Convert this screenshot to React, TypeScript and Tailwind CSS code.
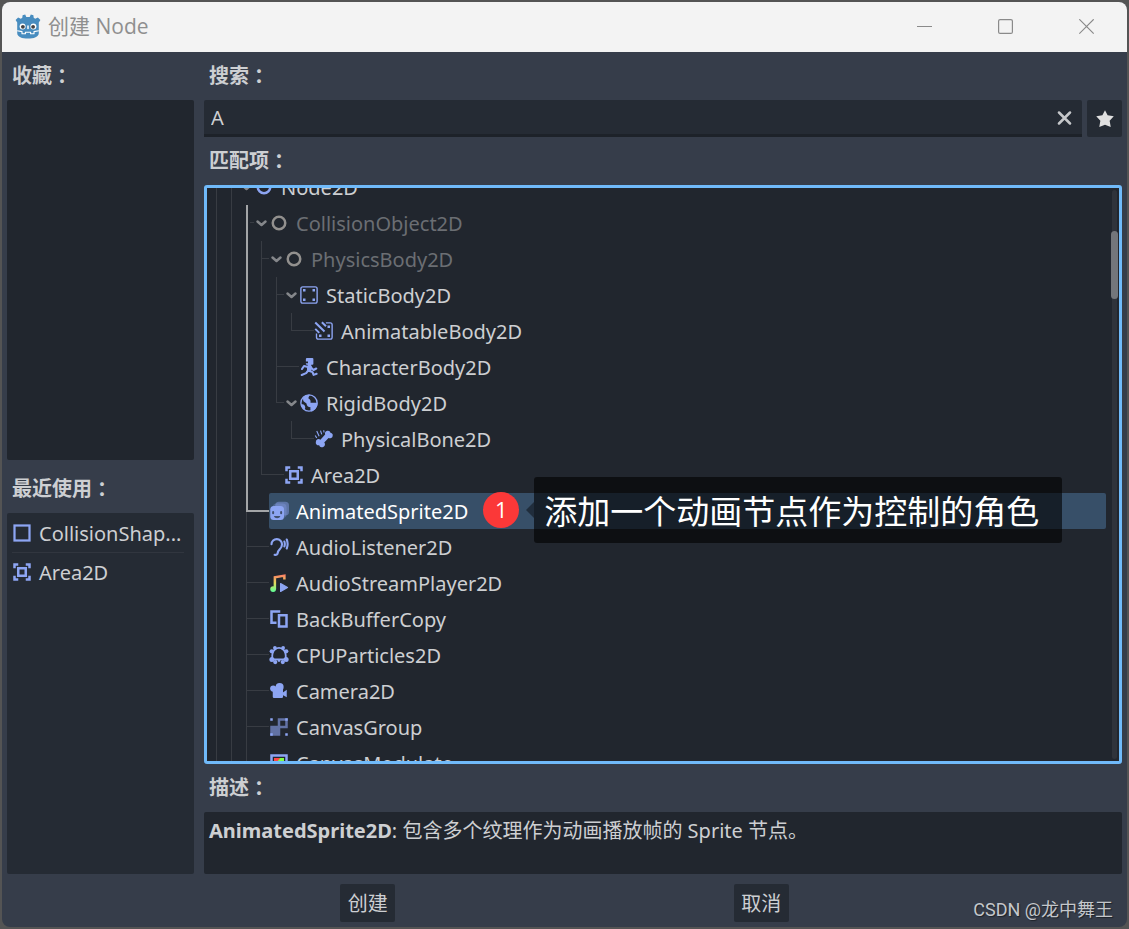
import React from "react";

const BLUE = "#8da5f3";

type IconName =
  | "node2d" | "node" | "static" | "animatable" | "character" | "rigid" | "bone" | "area"
  | "sprite" | "listener" | "audio" | "buffer" | "particles" | "camera" | "group" | "modulate" | "shape";

const drawings: Record<IconName, React.ReactNode> = {
  node2d: <circle cx="8" cy="8" r="5" fill="none" stroke={BLUE} strokeWidth="2" />,
  node: <circle cx="8" cy="8" r="5" fill="none" stroke="#92908e" strokeWidth="2" />,
  static: (
    <>
      <rect x="1.500" y="1.500" width="13" height="13" rx="1.500" fill="none" stroke={BLUE} strokeWidth="1.100" />
      <path fill={BLUE} d="M3.200 3.200h2v2h-2zM10.800 3.200h2v2h-2zM3.200 10.800h2v2h-2zM10.800 10.800h2v2h-2z" />
    </>
  ),
  animatable: (
    <>
      <path
        fill="none"
        stroke={BLUE}
        strokeWidth="1.100"
        d="M9.500 1.500H13a1.500 1.500 0 0 1 1.500 1.500v10a1.500 1.500 0 0 1-1.500 1.500H3.500A1.500 1.500 0 0 1 2 13v-3"
      />
      <path fill={BLUE} d="M10.800 3.600h2v2h-2zM4 10.800h2v2H4zM10.800 10.800h2v2h-2z" />
      <path fill="none" stroke={BLUE} strokeWidth="1.600" d="M1 1.200l7.400 7.200M6.300 1l3.300 3.200M1 6.300l3.200 3.200" />
    </>
  ),
  character: (
    <>
      <path
        fill={BLUE}
        d="M6.300.8h4.400a.8.8 0 0 1 .8.8v3.800a.8.8 0 0 1-.8.8H9.800l-.2 1.300H7.200l-.3-1.300h-.6a.8.8 0 0 1-.8-.8V4.900h1.700V3.500H5.500V1.600a.8.8 0 0 1 .8-.8z"
      />
      <path fill={BLUE} d="M6.400 7h3.800v3l-1 2H6.400z" />
      <path
        fill="none"
        stroke={BLUE}
        strokeWidth="1.700"
        strokeLinecap="round"
        strokeLinejoin="round"
        d="M2.400 9.600L4 7.200l3.200.8M9.400 8.200l2.200 2.200 2.200-1.200M7.200 11l-1.500 1.900-3.500 1.500M8.400 11.200l2.400.9.900 2.200 2.400-.9"
      />
    </>
  ),
  rigid: (
    <>
      <circle cx="8" cy="8" r="6.500" fill="none" stroke={BLUE} strokeWidth="1.100" />
      <path
        fill={BLUE}
        d="M3.400 3.200C5 1.800 6.800 1.300 9 1.500c-1 .8-1.500 1.800-1.400 2.900C9 4.900 9.500 6.200 9.200 7.700h5.600c.2 3.600-2.200 6.400-5.400 7.100-.3-1.600-.4-2.500-.2-3.400C7.300 11.300 6.100 10.100 6 8.300L3.600 6.600C3.200 5.400 3.100 4.200 3.400 3.200z"
      />
      <path fill={BLUE} d="M1.500 9.100c1.200-.3 2.400.1 3.100 1 .6 1 .5 2.200-.3 3.300C2.800 12.600 1.700 11 1.500 9.100z" />
    </>
  ),
  bone: (
    <>
      <path
        fill={BLUE}
        d="M10.600 1.400a2.200 2.200 0 0 1 2.600 1.600 2.200 2.200 0 0 1 1.700 2.700 2.200 2.200 0 0 1-3.300 1.400l-3.400 3.700a2.200 2.200 0 0 1-1.300 3.700 2.200 2.200 0 0 1-2.800-1.500 2.200 2.200 0 0 1-2.600-2.800 2.200 2.200 0 0 1 3.600-1.700l3.800-4.100a2.200 2.200 0 0 1 1.700-3z"
      />
      <path fill="none" stroke={BLUE} strokeWidth=".9" d="M1 5.200l1.200 2M2.200 1.600l1.900 4.200M5.200 1.300l1 3M7.800 1l.2 1.800" />
    </>
  ),
  area: (
    <path
      fill={BLUE}
      fillRule="evenodd"
      d="M1 1v4h2V3h2V1zM11 1v2h2v2h2V1zM1 11v4h4v-2H3v-2zM13 11v2h-2v2h4v-4zM4 4v8h8V4zM6 6h4v4H6z"
    />
  ),
  sprite: (
    <>
      <rect x="5" y="0.500" width="11" height="11" rx="3" fill={BLUE} opacity=".45" />
      <rect x="3" y="2" width="11" height="11.500" rx="3" fill={BLUE} opacity=".3" />
      <rect x="1" y="4" width="11" height="11.200" rx="2.800" fill={BLUE} />
      <path stroke="#42506e" strokeWidth="1.600" strokeLinecap="round" d="M3.300 8.900v.8M9.700 8.900v.8" />
      <path fill="#42506e" d="M3.900 12h5.200c-.4 1.200-1.400 1.700-2.600 1.700s-2.200-.5-2.600-1.700z" />
    </>
  ),
  listener: (
    <path
      fill="none"
      stroke={BLUE}
      strokeWidth="1.700"
      strokeLinecap="round"
      d="M2 5.800a4.200 4.200 0 0 1 8.400.2c0 3.600-3 3.800-3.400 6.600-.2 1.400-1.200 2-2.500 1.600M12.300 3.600c.5 1.400.5 2.600 0 4M14.200 2c.9 2.300.9 5 0 7.200"
    />
  ),
  audio: (
    <>
      <defs>
        <linearGradient id="note" x1="0" x2="0" y1="1" y2="15" gradientUnits="userSpaceOnUse">
          <stop offset="0" stopColor="#ff7a66" />
          <stop offset=".5" stopColor="#e1da5b" />
          <stop offset="1" stopColor="#5fff97" />
        </linearGradient>
      </defs>
      <path fill="none" stroke="url(#note)" strokeWidth="2" d="M4.700 13V3.400l7.600-1.300v3" />
      <circle cx="3.300" cy="12.800" r="2.300" fill="url(#note)" />
      <path fill={BLUE} stroke={BLUE} strokeWidth="1" strokeLinejoin="round" d="M9.300 8.500v6.200l5.500-3.100z" />
    </>
  ),
  buffer: <path fill={BLUE} fillRule="evenodd" d="M1 1v11h5v-2H3V3h6V1zM7 4v11h8V4zM9 6h4v7H9z" />,
  particles: (
    <>
      <path
        fill="none"
        stroke={BLUE}
        strokeWidth="1.400"
        d="M5 3.400C6.500 2 9.500 2 11 3.400c2.200 1.600 2.600 3.600 2.400 6.800-.4.900-1 1.300-2 1.300H4.600c-1 0-1.600-.4-2-1.300C2.400 7 2.800 5 5 3.400z"
      />
      <g fill={BLUE}>
        <circle cx="4.700" cy="2.200" r="1.500" />
        <circle cx="11.300" cy="2.200" r="1.500" />
        <circle cx="2.200" cy="5" r="1.700" />
        <circle cx="13.800" cy="5" r="1.700" />
        <circle cx="2.300" cy="11.500" r="2" />
        <circle cx="13.700" cy="11.500" r="2" />
        <circle cx="5" cy="13.600" r="1.700" />
        <circle cx="11" cy="13.600" r="1.700" />
        <circle cx="8" cy="12.400" r="1.100" />
      </g>
    </>
  ),
  camera: (
    <g fill={BLUE}>
      <circle cx="8.500" cy="4.700" r="3.200" />
      <circle cx="3.400" cy="6" r="2.500" />
      <rect x="3" y="5.500" width="8.200" height="8" rx="1" />
      <path d="M10.500 9.500l3.700-2.500v6l-3.700-2z" />
    </g>
  ),
  group: (
    <g fill={BLUE}>
      <path opacity=".6" fillRule="evenodd" d="M7 1h8v8H9v6H1V7h6zM9 3v4h4V3z" />
      <path d="M1 1h2v2H1zM13 1h2v2h-2zM1 13h2v2H1zM13 13h2v2h-2z" />
    </g>
  ),
  modulate: (
    <>
      <rect x="2" y="2" width="12" height="12" fill="#21262e" stroke={BLUE} strokeWidth="2" />
      <path fill="#ff4545" d="M4 4h6l-6 6z" />
      <path fill="#80ff45" d="M9 4h3v6H4z" />
      <path fill="#45d7ff" d="M4 9h8v3H4z" />
    </>
  ),
  shape: <rect x="2" y="2" width="12" height="12" fill="none" stroke={BLUE} strokeWidth="1.800" />,
};

function NodeIcon({ name }: { name: IconName }) {
  return (
    <svg viewBox="0 0 16 16" className="size-5 shrink-0" aria-hidden="true">
      {drawings[name]}
    </svg>
  );
}

/*
 * Guides, one character per tree level:
 *   "|" line passing through, "H" highlighted line, " " nothing.
 * The last character is the branch of the row itself:
 *   "t" tee, "T" tee on the highlighted line, "l" last child, "L" highlighted end.
 */
type Row = { name: string; icon: IconName; guides: string; open?: boolean; dim?: boolean; selected?: boolean };

const rows: Row[] = [
  { name: "Node2D", icon: "node2d", guides: "|t", open: true },
  { name: "CollisionObject2D", icon: "node", guides: "||T", open: true, dim: true },
  { name: "PhysicsBody2D", icon: "node", guides: "||Ht", open: true, dim: true },
  { name: "StaticBody2D", icon: "static", guides: "||H|t", open: true },
  { name: "AnimatableBody2D", icon: "animatable", guides: "||H||l" },
  { name: "CharacterBody2D", icon: "character", guides: "||H|t" },
  { name: "RigidBody2D", icon: "rigid", guides: "||H|l", open: true },
  { name: "PhysicalBone2D", icon: "bone", guides: "||H| l" },
  { name: "Area2D", icon: "area", guides: "||Hl" },
  { name: "AnimatedSprite2D", icon: "sprite", guides: "||L", selected: true },
  { name: "AudioListener2D", icon: "listener", guides: "||t" },
  { name: "AudioStreamPlayer2D", icon: "audio", guides: "||t" },
  { name: "BackBufferCopy", icon: "buffer", guides: "||t" },
  { name: "CPUParticles2D", icon: "particles", guides: "||t" },
  { name: "Camera2D", icon: "camera", guides: "||t" },
  { name: "CanvasGroup", icon: "group", guides: "||t" },
  { name: "CanvasModulate", icon: "modulate", guides: "||t" },
];

function Guide({ kind }: { kind: string }) {
  return (
    <span className="flex w-[15px] shrink-0">
      {kind === "|" && <span className="w-px bg-[#383c43]" />}
      {kind === "H" && <span className="w-[2px] bg-[#a3a5a7]" />}
    </span>
  );
}

function Branch({ kind, open }: { kind: string; open?: boolean }) {
  return (
    <span className={open ? "flex w-2 shrink-0" : "flex w-[23px] shrink-0"}>
      {kind === "t" && <span className="w-px bg-[#383c43]" />}
      {kind === "T" && <span className="mr-[2px] w-[2px] bg-[#a3a5a7]" />}
      {kind === "l" && <span className="h-[18px] w-px bg-[#383c43]" />}
      {kind === "L" && (
        <span className="flex w-[2px] flex-col">
          <span className="h-[19px] bg-[#a3a5a7]" />
          <span className="w-px flex-1 bg-[#383c43]" />
        </span>
      )}
      <span
        className={kind === "L" ? "mt-[17px] h-[2px] flex-1 bg-[#a3a5a7]" : "mt-[17px] h-px flex-1 bg-[#383c43]"}
      />
    </span>
  );
}

function Callout() {
  return (
    <span className="absolute -top-4 left-full ml-[15px] flex h-[66px] items-center">
      <span className="flex size-9 items-center justify-center rounded-full bg-[#fb3838] pb-[2px] font-['Open_Sans',sans-serif] text-[22px] text-white">
        1
      </span>
      <svg viewBox="0 0 8 16" className="ml-[7px] h-4 w-2" aria-hidden="true">
        <path d="M8 0v16L0 8z" fill="#000" fillOpacity=".42" />
      </svg>
      <span className="flex h-full items-center rounded-[3px] bg-black/60 pt-[3px] pr-[23px] pl-[10px] text-[33px] whitespace-nowrap text-white">
        添加一个动画节点作为控制的角色
      </span>
    </span>
  );
}

function TreeRow({ row }: { row: Row }) {
  const passing = row.guides.slice(0, -1).split("");
  const textColor = row.selected ? "text-white" : row.dim ? "text-[#6b6e73]" : "text-[#cdcfd2]";
  return (
    <li role="treeitem" aria-selected={!!row.selected} aria-expanded={row.open} className="flex h-9 shrink-0 pl-[9px]">
      {passing.map((kind, i) => (
        <Guide key={i} kind={kind} />
      ))}
      <Branch kind={row.guides.slice(-1)} open={row.open} />
      {row.open && (
        <svg viewBox="0 0 15 36" className="h-9 w-[15px] shrink-0" aria-hidden="true">
          <path
            d="M3.500 16.500l4 3.500 4-3.500"
            fill="none"
            stroke="#85878b"
            strokeWidth="2.500"
            strokeLinecap="round"
            strokeLinejoin="round"
          />
        </svg>
      )}
      <span
        className={
          row.selected
            ? "flex flex-1 items-center gap-[7px] rounded-[2px] bg-[#374f68]"
            : "flex flex-1 items-center gap-[7px]"
        }
      >
        <NodeIcon name={row.icon} />
        <span className={`relative h-9 leading-[38px] ${textColor}`}>
          {row.name}
          {row.selected && <Callout />}
        </span>
      </span>
    </li>
  );
}

function Heading({ children, id }: { children: string; id?: string }) {
  return (
    <h2 id={id} className="flex h-12 shrink-0 items-center pl-[5px] font-bold text-[#cdcfd2]">
      {children}
      <span className="font-['Noto_Sans_CJK_JP',sans-serif]">：</span>
    </h2>
  );
}

function GodotLogo() {
  return (
    <svg viewBox="0 0 26 26" className="size-[26px]" aria-hidden="true">
      <path
        fill="#478cbf"
        d="M7.600 1.200l2.600-.7 1.100 2.500h3.400l1.100-2.500 2.600.7.300 2.600 1.500.9 2.700-1.300 2.500 2.600-1.600 2.400V19c0 4-5 5.600-10.800 5.600S2.200 23 2.200 19V8.400L.6 6l2.500-2.600 2.700 1.300 1.500-.9z"
      />
      <circle cx="7.600" cy="12.600" r="3" fill="#fff" />
      <circle cx="18.400" cy="12.600" r="3" fill="#fff" />
      <circle cx="7.900" cy="12.800" r="1.900" fill="#414042" />
      <circle cx="18.100" cy="12.800" r="1.900" fill="#414042" />
      <path stroke="#fff" strokeWidth="1.500" strokeLinecap="round" d="M13 12v2.600" />
      <path
        fill="none"
        stroke="#fff"
        strokeWidth="1.100"
        strokeLinejoin="round"
        d="M2.200 16.800l4.800.8v2.200h3.400v-1.600h5.200v1.600H19v-2.200l4.800-.8"
      />
    </svg>
  );
}

const recent: { name: string; icon: IconName }[] = [
  { name: "CollisionShap...", icon: "shape" },
  { name: "Area2D", icon: "area" },
];

export default function App() {
  return (
    <div className="h-screen bg-[#545454] p-[2px] font-['Noto_Sans','Noto_Sans_CJK_SC',sans-serif] text-xl text-[#cdcfd2]">
      <div className="relative flex h-full flex-col overflow-hidden rounded-lg bg-[#363d4a]">
        <header className="flex h-[50px] shrink-0 items-center bg-[#f3f3f3] pl-[13px]">
          <GodotLogo />
          <h1 className="ml-[7px] flex-1 font-['Open_Sans','Noto_Sans_CJK_SC',sans-serif] text-[21px] font-normal text-[#8f8f8f]">
            创建 Node
          </h1>
          <button aria-label="最小化" className="flex h-full w-[81px] items-center justify-center">
            <svg viewBox="0 0 16 16" className="size-4" fill="none" stroke="#8a8a8a">
              <path d="M0 7.500h15" />
            </svg>
          </button>
          <button aria-label="最大化" className="flex h-full w-[81px] items-center justify-center">
            <svg viewBox="0 0 16 16" className="size-4" fill="none" stroke="#8a8a8a" strokeWidth="1.200">
              <rect x=".6" y=".6" width="13.800" height="13.800" rx="1.500" />
            </svg>
          </button>
          <button aria-label="关闭" className="flex h-full w-[81px] items-center justify-center">
            <svg viewBox="0 0 16 16" className="size-4" fill="none" stroke="#8a8a8a" strokeWidth="1.200">
              <path d="M.3.300l14.400 14.400M14.700.300L.3 14.700" />
            </svg>
          </button>
        </header>

        <div className="flex min-h-0 flex-1 gap-[10px] px-[5px]">
          <aside className="flex w-[187px] shrink-0 flex-col">
            <Heading>收藏</Heading>
            <div className="flex-1 rounded-[2px] bg-[#21262e]" />
            <div className="flex h-[53px] shrink-0 items-end">
              <Heading>最近使用</Heading>
            </div>
            <ul className="flex-1 rounded-[2px] bg-[#252b34] px-[5px] pt-[2px]">
              {recent.map((item, i) => (
                <li
                  key={item.name}
                  className={
                    i < recent.length - 1
                      ? "mr-[5px] flex h-[38px] items-center gap-[7px] border-b border-[#31363f]"
                      : "mr-[5px] flex h-[38px] items-center gap-[7px]"
                  }
                >
                  <NodeIcon name={item.icon} />
                  <span className="pt-[2px] whitespace-nowrap">{item.name}</span>
                </li>
              ))}
            </ul>
          </aside>

          <main className="flex min-w-0 flex-1 flex-col">
            <Heading id="search-label">搜索</Heading>
            <div className="flex h-[37px] shrink-0 gap-[5px]">
              <div className="flex min-w-0 flex-1 items-center rounded-t-[2px] border-b-3 border-[#1d2229] bg-[#252b34] pr-[9px] pl-[7px]">
                <input
                  type="text"
                  aria-labelledby="search-label"
                  defaultValue="A"
                  className="h-full min-w-0 flex-1 bg-transparent text-[#cdcfd2] outline-none"
                />
                <button aria-label="清除" className="flex h-full items-center">
                  <svg viewBox="0 0 16 16" className="size-4" fill="none" stroke="#c6c8cb" strokeWidth="2.500" strokeLinecap="round">
                    <path d="M2 3.500l11 11M13 3.500l-11 11" />
                  </svg>
                </button>
              </div>
              <button aria-label="收藏" className="flex w-[35px] items-center justify-center rounded-[2px] bg-[#252b34]">
                <svg viewBox="0 0 16 16" className="size-5" aria-hidden="true">
                  <path
                    fill="#e0e0e0"
                    d="M8 1L5.900 5 1 5.800l3.300 3.500-.9 5L8 12.500l4.600 1.800-.9-5L15 5.800 10.100 5z"
                  />
                </svg>
              </button>
            </div>

            <Heading id="matches-label">匹配项</Heading>
            <div className="flex min-h-0 flex-1 gap-[5px] overflow-hidden rounded-[3px] border-3 border-[#70bafa] bg-[#21262e] pr-px">
              <ul role="tree" aria-labelledby="matches-label" className="-mt-[19px] flex flex-1 flex-col">
                {rows.map((row) => (
                  <TreeRow key={row.name} row={row} />
                ))}
              </ul>
              <div className="relative my-[2px] flex w-[7px] justify-center">
                <div className="w-[5px] rounded-full bg-[#2f333b]" />
                <div className="absolute top-[41px] h-[68px] w-[7px] rounded-full bg-[#73767b]" />
              </div>
            </div>

            <Heading>描述</Heading>
            <p className="h-[62px] shrink-0 rounded-[2px] bg-[#21262e] px-[5px] pt-[5px] leading-7">
              <strong className="font-bold">AnimatedSprite2D</strong>: 包含多个纹理作为动画播放帧的 Sprite 节点。
            </p>
          </main>
        </div>

        <footer className="flex shrink-0 gap-[5px] px-[5px] pt-[10px] pb-[5px]">
          <div className="flex-1" />
          <button className="h-[38px] w-[55px] rounded-[2px] bg-[#252b34] pt-[2px]">创建</button>
          <div className="flex-1" />
          <button className="h-[38px] w-[55px] rounded-[2px] bg-[#252b34] pt-[2px]">取消</button>
          <div className="flex-1" />
        </footer>

        <div className="absolute right-[14px] bottom-[3px] font-['Roboto','Noto_Sans_CJK_SC',sans-serif] text-lg text-[#c4c7cb] [text-shadow:1px_1px_1px_#1d2229]">
          CSDN @龙中舞王
        </div>
      </div>
    </div>
  );
}
